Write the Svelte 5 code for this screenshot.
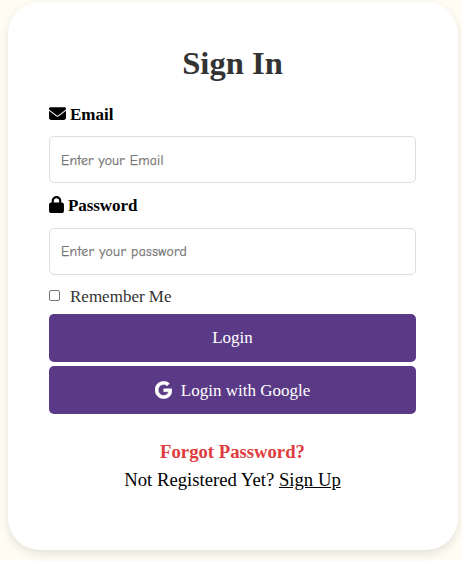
<script>
  let email = $state('');
  let password = $state('');
  let remember = $state(false);
</script>

<main>
  <form class="card" onsubmit={(e) => e.preventDefault()}>
    <h1>Sign In</h1>

    <label class="label" for="email">
      <svg width="17" height="17" viewBox="0 0 512 512" aria-hidden="true"><path fill="currentColor" d="M48 64C21.500 64 0 85.500 0 112c0 15.100 7.100 29.300 19.200 38.400L236.800 313.600c11.400 8.500 27 8.500 38.400 0L492.800 150.400c12.100-9.100 19.200-23.300 19.200-38.400c0-26.500-21.500-48-48-48H48zM0 176V384c0 35.300 28.700 64 64 64H448c35.300 0 64-28.700 64-64V176L294.400 339.200c-22.800 17.100-54 17.100-76.800 0L0 176z"/></svg>
      <span>Email</span>
    </label>
    <input class="field" id="email" type="email" placeholder="Enter your Email" bind:value={email} />

    <label class="label second" for="password">
      <svg width="15" height="17" viewBox="0 0 448 512" aria-hidden="true"><path fill="currentColor" d="M144 144v48H304V144c0-44.200-35.800-80-80-80s-80 35.800-80 80zM80 192V144C80 64.500 144.500 0 224 0s144 64.500 144 144v48h16c35.300 0 64 28.700 64 64V448c0 35.300-28.700 64-64 64H64c-35.300 0-64-28.700-64-64V256c0-35.300 28.700-64 64-64H80z"/></svg>
      <span>Password</span>
    </label>
    <input class="field pass" id="password" type="password" placeholder="Enter your password" bind:value={password} />

    <label class="remember">
      <input type="checkbox" bind:checked={remember} />
      <span>Remember Me</span>
    </label>

    <button type="submit">Login</button>
    <button type="button">
      <svg width="17" height="18" viewBox="0 0 488 512" aria-hidden="true"><path fill="currentColor" stroke="currentColor" stroke-width="12" d="M488 261.800C488 403.300 391.100 504 248 504 110.800 504 0 393.200 0 256S110.800 8 248 8c66.800 0 123 24.500 166.300 64.900l-67.500 64.900C258.500 52.600 94.300 116.600 94.300 256c0 86.500 69.100 156.600 153.700 156.600 98.200 0 135-70.400 140.800-106.900H248v-85.300h236.100c2.300 12.700 3.900 24.900 3.900 41.400z"/></svg>
      <span>Login with Google</span>
    </button>

    <div class="links">
      <a class="forgot" href="#forgot">Forgot Password?</a>
      <p>Not Registered Yet? <a href="#signup">Sign Up</a></p>
    </div>
  </form>
</main>

<style>
  :global(body) {
    background: #fffcf4;
    overflow: hidden;
  }
  main {
    box-sizing: border-box;
    height: 561px;
    padding: 2px 4px 11px 8px;
    font-family: "Liberation Serif", "Times New Roman", serif;
    font-size: 17px;
    color: #000;
  }
  .card {
    box-sizing: border-box;
    display: flex;
    flex-direction: column;
    height: 548px;
    padding: 42px 42px 0 41px;
    background: #fff;
    border-radius: 32px;
    box-shadow: 0 4px 10px rgba(0, 0, 0, 0.1);
  }
  h1 {
    margin: 0;
    line-height: 38px;
    font-size: 32.6px;
    text-align: center;
    color: #333;
  }
  .label {
    display: flex;
    align-items: flex-start;
    gap: 4px;
    height: 20px;
    margin-top: 22px;
    font-weight: bold;
    line-height: 20px;
  }
  .label svg {
    display: block;
    flex: none;
    margin-top: 1px;
  }
  .label span {
    padding-top: 1px;
  }
  .label.second {
    margin-top: 12px;
  }
  .label.second span {
    letter-spacing: -0.08px;
  }
  .field {
    box-sizing: border-box;
    width: 100%;
    height: 47px;
    margin: 12px 0 0;
    padding: 2px 11px 0;
    border: 1px solid #ddd;
    border-radius: 5px;
    outline: none;
    background: #fff;
    font-family: "Comic Sans MS", "Comic Neue", "Open Sans", sans-serif;
    font-size: 13.7px;
    letter-spacing: 0.22px;
  }
  .field.pass {
    margin-top: 13px;
    padding-top: 0;
    letter-spacing: 0.34px;
  }
  .field::placeholder {
    color: #757575;
    -webkit-text-stroke: 0.25px #757575;
  }
  .remember {
    display: flex;
    align-items: flex-start;
    height: 20px;
    margin-top: 12px;
    line-height: 20px;
    color: #333;
  }
  .remember input {
    box-sizing: border-box;
    appearance: none;
    width: 11px;
    height: 11px;
    margin: 3px 10px 0 0;
    border: 1px solid #767676;
    border-radius: 2px;
    background: #fff;
  }
  .remember input:checked {
    background: #5a3a86;
  }
  button {
    display: flex;
    align-items: center;
    justify-content: center;
    gap: 9px;
    width: 100%;
    height: 48px;
    margin: 4px 0 0;
    padding: 0;
    border: 0;
    border-radius: 5px;
    background: #5a3a86;
    color: #fff;
    font: inherit;
    cursor: pointer;
  }
  button svg + span {
    padding-top: 2px;
  }
  button[type="submit"] {
    margin-top: 7px;
  }
  .links {
    margin-top: 24px;
    text-align: center;
    font-size: 18.7px;
    line-height: 28px;
  }
  .forgot {
    display: block;
    color: #e03c3e;
    font-weight: bold;
    text-decoration: none;
  }
  p {
    margin: 0;
  }
  p a {
    color: inherit;
  }
</style>
